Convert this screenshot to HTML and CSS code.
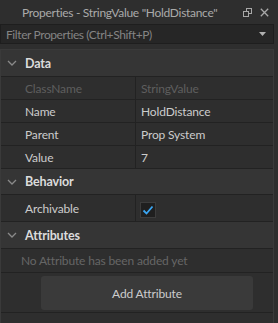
FILE: index.html
```html
<!DOCTYPE html>
<html>
<head>
<meta charset="utf-8">
<link rel="stylesheet" href="styles.css">
</head>
<body>
<div class="win">
  <div class="titlebar">
    <span class="title">Properties - StringValue "HoldDistance"</span>
    <div class="tb-icons">
      <svg width="9" height="9" viewBox="0 0 9 9" class="ico"><rect x="3.5" y="0.5" width="5" height="5" fill="none" stroke="#a8a8a8"/><rect x="0.5" y="3.5" width="5" height="5" fill="#2e2e2e" stroke="#a8a8a8"/></svg>
      <svg width="9" height="9" viewBox="0 0 9 9" class="ico"><path d="M0.8 0.8L8.2 8.2M8.2 0.8L0.8 8.2" stroke="#a8a8a8" stroke-width="1.3"/></svg>
    </div>
  </div>
  <div class="filter">
    <span class="filter-text">Filter Properties (Ctrl+Shift+P)</span>
    <svg width="7" height="4" viewBox="0 0 7 4" class="drop"><path d="M0 0H7L3.5 4Z" fill="#b0b0b0"/></svg>
  </div>
  <div class="panel">
    <div class="section">
      <svg width="10" height="6" viewBox="0 0 10 6" class="chev"><path d="M1 1L5 5L9 1" fill="none" stroke="#8a8a8a" stroke-width="1.3"/></svg>
      <span>Data</span>
    </div>
    <div class="row"><div class="name dim">ClassName</div><div class="val dim">StringValue</div></div>
    <div class="row"><div class="name">Name</div><div class="val">HoldDistance</div></div>
    <div class="row"><div class="name">Parent</div><div class="val">Prop System</div></div>
    <div class="row"><div class="name">Value</div><div class="val">7</div></div>
    <div class="section sec-b">
      <svg width="10" height="6" viewBox="0 0 10 6" class="chev"><path d="M1 1L5 5L9 1" fill="none" stroke="#8a8a8a" stroke-width="1.3"/></svg>
      <span>Behavior</span>
    </div>
    <div class="row row-tall"><div class="name">Archivable</div><div class="val"><span class="check"><svg width="12" height="10" viewBox="0 0 12 10"><path d="M1.5 5.5L4.5 8.5L10.5 1.5" fill="none" stroke="#3aa6f3" stroke-width="1.8"/></svg></span></div></div>
    <div class="section">
      <svg width="10" height="6" viewBox="0 0 10 6" class="chev"><path d="M1 1L5 5L9 1" fill="none" stroke="#8a8a8a" stroke-width="1.3"/></svg>
      <span>Attributes</span>
    </div>
    <div class="empty">No Attribute has been added yet</div>
    <div class="btn-row"><div class="btn">Add Attribute</div></div>
  </div>
</div>
</body>
</html>
```
FILE: styles.css
```css
html, body { margin: 0; padding: 0; }
body {
  background: #2e2e2e;
  font-family: Lato, "Noto Sans", sans-serif;
  font-size: 12px;
  letter-spacing: -0.15px;
  color: #cccccc;
  width: 278px;
  height: 323px;
  overflow: hidden;
}
.win { width: 278px; height: 323px; display: flex; flex-direction: column; }
.titlebar {
  height: 24px;
  display: flex;
  align-items: center;
  flex: none;
}
.title { margin-left: 22px; color: #aaaaaa; font-size: 12px; letter-spacing: -0.3px; white-space: nowrap; }
.tb-icons { margin-left: auto; display: flex; gap: 8px; margin-right: 9px; }
.ico { display: block; }
.filter {
  height: 20px;
  width: 274px;
  box-sizing: border-box;
  background: #262626;
  border: 1px solid #1e1e1e;
  display: flex;
  align-items: center;
  flex: none;
}
.filter-text { margin-left: 5px; color: #848484; letter-spacing: -0.4px; white-space: nowrap; }
.drop { margin-left: auto; margin-right: 7px; }
.panel {
  margin-top: 5px;
  width: 274px;
  flex: 1;
  box-sizing: border-box;
  border: 1px solid #3a3a3a;
  border-bottom: none;
}
.section {
  height: 27px;
  box-sizing: border-box;
  background: #353535;
  border-bottom: 1px solid #222222;
  display: flex;
  align-items: center;
  font-weight: bold;
  font-size: 12.5px;
  color: #dcdcdc;
}
.sec-b { height: 26px; }
.chev { margin-left: 6px; margin-right: 8px; }
.row {
  height: 23px;
  box-sizing: border-box;
  border-bottom: 1px solid #222222;
  display: flex;
}
.row-tall { height: 27px; }
.name {
  width: 135px;
  box-sizing: border-box;
  padding-left: 24px;
  border-right: 1px solid #222222;
  display: flex;
  align-items: center;
}
.val { padding-left: 5px; display: flex; align-items: center; }
.dim { color: #5e5e5e; }
.check {
  width: 16px;
  height: 16px;
  box-sizing: border-box;
  background: #1f1f1f;
  border: 1px solid #3c3c3c;
  display: flex;
  align-items: center;
  justify-content: center;
  margin-left: -1px;
  margin-top: 3px;
}
.empty {
  height: 24px;
  box-sizing: border-box;
  border-bottom: 1px solid #222222;
  padding-left: 20px;
  display: flex;
  align-items: center;
  color: #666666;
}
.btn-row {
  height: 40px;
  box-sizing: border-box;
  border-bottom: 1px solid #222222;
  padding: 3px 0 0 40px;
}
.btn {
  width: 212px;
  height: 34px;
  background: #3a3a3a;
  border-radius: 3px;
  display: flex;
  align-items: center;
  justify-content: center;
  color: #cccccc;
}
```
